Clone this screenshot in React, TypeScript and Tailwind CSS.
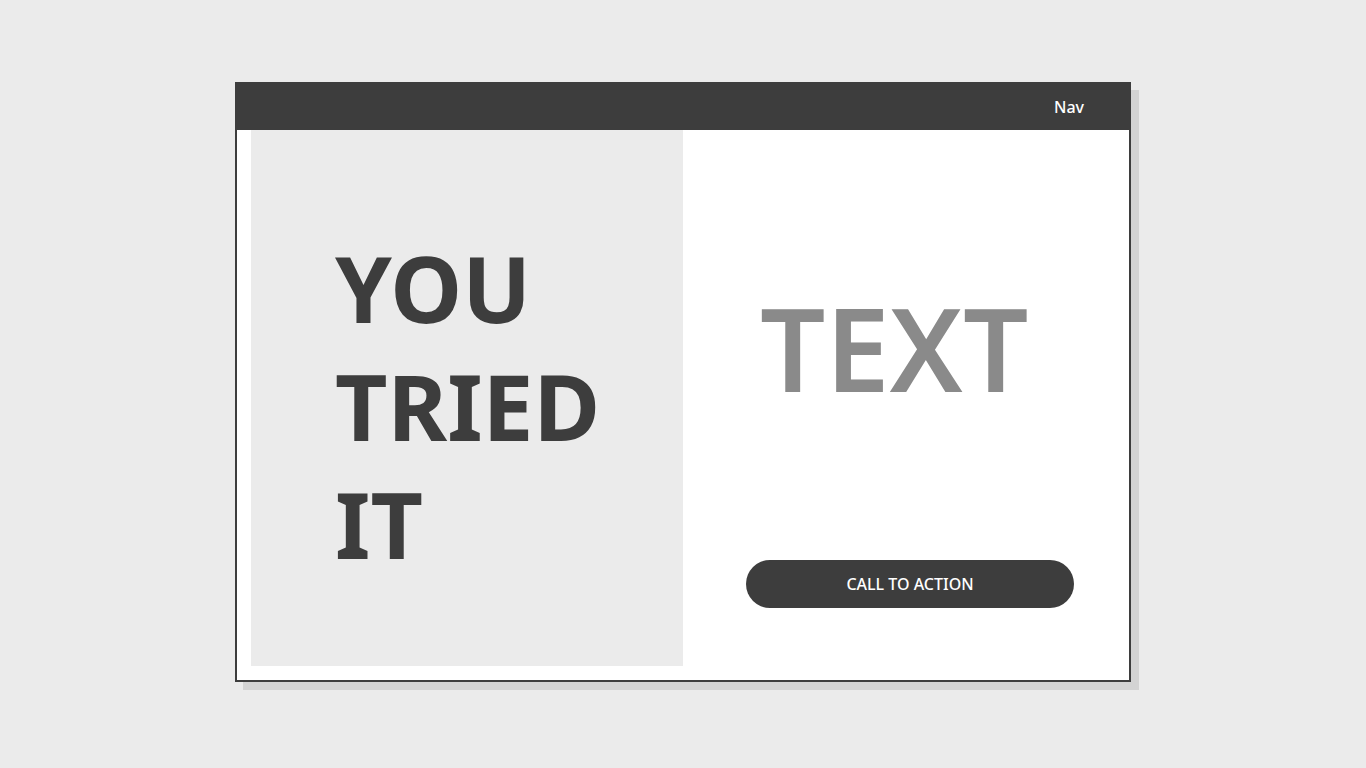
const App = () => {
  return (
    <div
      className="min-h-screen w-full bg-[#ebebeb] pt-[82px]"
      style={{ fontFamily: '"Noto Sans", "Open Sans", sans-serif' }}
    >
      <div className="ml-[235px] w-[896px] border-2 border-[#3d3d3d] bg-white shadow-[8px_8px_0_#d3d3d3]">
        <header className="flex h-[46px] items-center justify-end bg-[#3d3d3d] pr-[45px]">
          <span className="text-[16px] font-medium text-white">Nav</span>
        </header>

        <div className="flex h-[550px]">
          <div className="mb-[14px] ml-[14px] flex w-[432px] items-center bg-[#ebebeb] pl-[84px] pt-[16px]">
            <h1 className="text-[91px] font-bold leading-[118px] text-[#3d3d3d]">
              YOU
              <br />
              TRIED
              <br />
              IT
            </h1>
          </div>

          <div className="flex flex-1 flex-col">
            <p className="pl-[77px] pt-[160px] text-[115px] font-semibold leading-none text-[#8a8a8a]">
              TEXT
            </p>
            <button className="ml-[63px] mt-[155px] flex h-[48px] w-[328px] items-center justify-center rounded-full bg-[#3d3d3d] text-[16px] font-medium text-white">
              CALL TO ACTION
            </button>
          </div>
        </div>
      </div>
    </div>
  );
};

export default App;
